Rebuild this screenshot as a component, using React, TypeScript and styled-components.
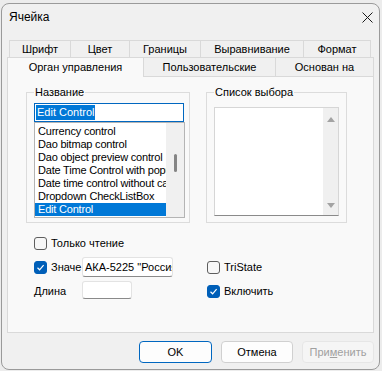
import React from "react";
import styled, { createGlobalStyle } from "styled-components";

const GlobalStyle = createGlobalStyle`
  html, body {
    margin: 0;
    padding: 0;
    background: #ececec;
  }
  body {
    font-family: "Liberation Sans", Arial, sans-serif;
    font-size: 11px;
    color: #000;
  }
`;

const Window = styled.div`
  box-sizing: border-box;
  width: 379px;
  height: 367px;
  margin: 3px 0 0 1px;
  background: #f0f0f0;
  border: 1px solid #9a9a9a;
  border-radius: 8px;
  display: flex;
  flex-direction: column;
  overflow: hidden;
`;

const TitleBar = styled.div`
  height: 26px;
  display: flex;
  align-items: center;
  justify-content: space-between;
  padding: 0 6px 0 7px;
  font-size: 12px;
`;

const CloseButton = styled.div`
  width: 12px;
  height: 12px;
  display: flex;
  align-items: center;
  justify-content: center;
`;

const Content = styled.div`
  display: flex;
  flex-direction: column;
  padding: 10px 5px 0 5px;
`;

const TabRow = styled.div<{ $indent: number; $h: number }>`
  display: flex;
  height: ${(p) => p.$h}px;
  padding-left: ${(p) => p.$indent}px;
`;

const Tab = styled.div<{ $w: number; $active?: boolean }>`
  box-sizing: border-box;
  width: ${(p) => p.$w}px;
  height: ${(p) => (p.$active ? "calc(100% + 1px)" : "100%")};
  margin-left: -1px;
  &:first-child {
    margin-left: 0;
  }
  border: 1px solid #d9d9d9;
  border-bottom: none;
  background: ${(p) => (p.$active ? "#f9f9f9" : "#f0f0f0")};
  position: ${(p) => (p.$active ? "relative" : "static")};
  z-index: ${(p) => (p.$active ? 1 : 0)};
  display: flex;
  align-items: center;
  justify-content: center;
  padding-bottom: ${(p) => (p.$active ? 2 : 0)}px;
  white-space: nowrap;
`;

const Panel = styled.div`
  box-sizing: border-box;
  height: 257px;
  background: #f9f9f9;
  border: 1px solid #d9d9d9;
  padding: 8px 0 0 18px;
  display: flex;
  flex-direction: column;
`;

const GroupsRow = styled.div`
  display: flex;
  gap: 16px;
`;

const Group = styled.fieldset<{ $w: number; $pt: number }>`
  box-sizing: border-box;
  width: ${(p) => p.$w}px;
  margin: 0;
  min-width: 0;
  border: 1px solid #dcdcdc;
  padding: ${(p) => p.$pt}px 5px 4px 7px;
`;

const Legend = styled.legend`
  padding: 0 1px;
  line-height: 14px;
  color: #000;
`;

const EditBox = styled.div`
  box-sizing: border-box;
  width: 150px;
  height: 19px;
  background: #fff;
  border: 1px solid #0067c0;
  padding: 1px 1px;
  display: flex;
  align-items: center;
`;

const Selected = styled.span`
  background: #0078d7;
  color: #fff;
  line-height: 15px;
  padding: 0 1px;
`;

const ListBox = styled.div<{ $w: number; $h: number; $edge?: boolean }>`
  box-sizing: border-box;
  width: ${(p) => p.$w}px;
  height: ${(p) => p.$h}px;
  background: #fff;
  border: 1px solid ${(p) => (p.$edge ? "#d6d6d6" : "#b4b4b4")};
  border-bottom-color: ${(p) => (p.$edge ? "#8a8a8a" : "#b4b4b4")};
  display: flex;
`;

const Items = styled.div`
  flex: 1;
  min-width: 0;
  padding-top: 2px;
  overflow: hidden;
  letter-spacing: -0.2px;
`;

const Item = styled.div<{ $selected?: boolean }>`
  height: 13px;
  line-height: 13px;
  padding-left: 3px;
  white-space: nowrap;
  overflow: hidden;
  background: ${(p) => (p.$selected ? "#0078d7" : "transparent")};
  color: ${(p) => (p.$selected ? "#fff" : "#000")};
`;

const SlimScroll = styled.div`
  width: 18px;
  background: #f0f0f0;
  display: flex;
  justify-content: center;
`;

const SlimThumb = styled.div`
  width: 3px;
  height: 18px;
  margin-top: 31px;
  background: #858585;
  border-radius: 2px;
`;

const ArrowScroll = styled.div`
  width: 15px;
  background: #f0f0f0;
  display: flex;
  flex-direction: column;
  align-items: center;
  justify-content: space-between;
  padding: 9px 0 7px;
`;

const Options = styled.div`
  display: grid;
  grid-template-columns: 48px 125px auto;
  grid-template-rows: 20px 20px 20px;
  row-gap: 4px;
  margin: 10px 0 0 8px;
  align-items: center;
`;

const Check = styled.label<{ $span?: number }>`
  display: flex;
  align-items: center;
  gap: 4px;
  grid-column: span ${(p) => p.$span ?? 1};
  white-space: nowrap;
`;

const Box = styled.span<{ $on?: boolean }>`
  box-sizing: border-box;
  width: 13px;
  height: 13px;
  border-radius: 3px;
  border: 1px solid ${(p) => (p.$on ? "#005fb8" : "#5e5e5e")};
  background: ${(p) => (p.$on ? "#005fb8" : "#f7f7f7")};
  display: flex;
  align-items: center;
  justify-content: center;
`;

const TextField = styled.div<{ $w: number; $h: number }>`
  box-sizing: border-box;
  width: ${(p) => p.$w}px;
  height: ${(p) => p.$h}px;
  background: #fff;
  border: 1px solid #e3e3e3;
  border-bottom-color: #8a8a8a;
  border-radius: 3px;
  padding: 0 2px;
  line-height: ${(p) => p.$h - 2}px;
  white-space: nowrap;
  overflow: hidden;
  align-self: start;
`;

const Label = styled.span`
  white-space: nowrap;
`;

const ButtonRow = styled.div`
  display: flex;
  justify-content: flex-end;
  gap: 9px;
  margin-top: 8px;
`;

const Button = styled.div<{ $w: number; $default?: boolean; $disabled?: boolean }>`
  box-sizing: border-box;
  width: ${(p) => p.$w}px;
  height: 22px;
  border-radius: 4px;
  border: 1px solid
    ${(p) => (p.$default ? "#0067c0" : p.$disabled ? "#e6e6e6" : "#d0d0d0")};
  background: ${(p) => (p.$disabled ? "#f5f5f5" : "#fdfdfd")};
  color: ${(p) => (p.$disabled ? "#a0a0a0" : "#000")};
  display: flex;
  align-items: center;
  justify-content: center;
`;

const tick = (
  <svg width="9" height="9" viewBox="0 0 9 9">
    <path d="M1.5 4.8 L3.6 6.8 L7.6 2.2" fill="none" stroke="#fff" strokeWidth="1.2" />
  </svg>
);

const names = [
  "Currency control",
  "Dao bitmap control",
  "Dao object preview control",
  "Date Time Control with popup",
  "Date time control without calendar",
  "Dropdown CheckListBox",
  "Edit Control",
];

export default function App() {
  return (
    <>
      <GlobalStyle />
      <Window>
        <TitleBar>
          <span>Ячейка</span>
          <CloseButton>
            <svg width="11" height="11" viewBox="0 0 11 11">
              <path d="M0.5 0.5 L10.5 10.5 M10.5 0.5 L0.5 10.5" stroke="#1a1a1a" strokeWidth="1" />
            </svg>
          </CloseButton>
        </TitleBar>
        <Content>
          <TabRow $indent={2} $h={17}>
            <Tab $w={62}>Шрифт</Tab>
            <Tab $w={60}>Цвет</Tab>
            <Tab $w={72}>Границы</Tab>
            <Tab $w={104}>Выравнивание</Tab>
            <Tab $w={68}>Формат</Tab>
          </TabRow>
          <TabRow $indent={0} $h={19}>
            <Tab $w={137} $active>
              Орган управления
            </Tab>
            <Tab $w={133}>Пользовательские</Tab>
            <Tab $w={99}>Основан на</Tab>
          </TabRow>
          <Panel>
            <GroupsRow>
              <Group $w={164} $pt={4}>
                <Legend>Название</Legend>
                <EditBox>
                  <Selected>Edit Control</Selected>
                </EditBox>
                <ListBox $w={151} $h={96}>
                  <Items>
                    {names.map((n) => (
                      <Item key={n} $selected={n === "Edit Control"}>
                        {n}
                      </Item>
                    ))}
                  </Items>
                  <SlimScroll>
                    <SlimThumb />
                  </SlimScroll>
                </ListBox>
              </Group>
              <Group $w={141} $pt={8}>
                <Legend>Список выбора</Legend>
                <ListBox $w={125} $h={109} $edge>
                  <Items />
                  <ArrowScroll>
                    <svg width="8" height="5" viewBox="0 0 8 5">
                      <path d="M0 5 L4 0 L8 5 Z" fill="#a3a3a3" />
                    </svg>
                    <svg width="8" height="5" viewBox="0 0 8 5">
                      <path d="M0 0 L8 0 L4 5 Z" fill="#a3a3a3" />
                    </svg>
                  </ArrowScroll>
                </ListBox>
              </Group>
            </GroupsRow>
            <Options>
              <Check $span={3}>
                <Box />
                Только чтение
              </Check>
              <Check>
                <Box $on>{tick}</Box>
                Значе
              </Check>
              <TextField $w={91} $h={20}>
                АКА-5225 "Россия"
              </TextField>
              <Check>
                <Box />
                TriState
              </Check>
              <Label>Длина</Label>
              <TextField $w={50} $h={18} />
              <Check>
                <Box $on>{tick}</Box>
                Включить
              </Check>
            </Options>
          </Panel>
          <ButtonRow>
            <Button $w={73} $default>
              OK
            </Button>
            <Button $w={72}>Отмена</Button>
            <Button $w={72} $disabled>
              При<u>м</u>енить
            </Button>
          </ButtonRow>
        </Content>
      </Window>
    </>
  );
}
